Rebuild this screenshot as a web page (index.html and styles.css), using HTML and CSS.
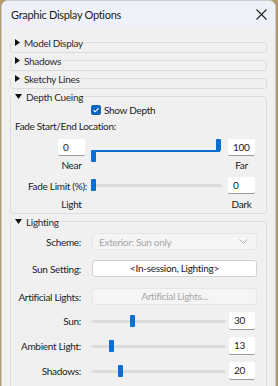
FILE: index.html
```html
<!DOCTYPE html>
<html lang="en">
<head>
<meta charset="UTF-8">
<title>Graphic Display Options</title>
<link rel="stylesheet" href="styles.css">
</head>
<body>

<div class="window">
  <div class="titlebar">
    <span class="title">Graphic Display Options</span>
    <svg class="close" width="11" height="11" viewBox="0 0 11 11"><path d="M0.5 0.5L10.5 10.5M10.5 0.5L0.5 10.5" stroke="#222" stroke-width="1.1"/></svg>
  </div>

  <div class="content">
    <div class="group collapsed">
      <div class="group-head"><svg class="tri" width="5" height="7" viewBox="0 0 5 7"><path d="M0 0L5 3.5L0 7Z" fill="#111"/></svg>Model Display</div>
    </div>
    <div class="group collapsed">
      <div class="group-head"><svg class="tri" width="5" height="7" viewBox="0 0 5 7"><path d="M0 0L5 3.5L0 7Z" fill="#111"/></svg>Shadows</div>
    </div>
    <div class="group collapsed">
      <div class="group-head"><svg class="tri" width="5" height="7" viewBox="0 0 5 7"><path d="M0 0L5 3.5L0 7Z" fill="#111"/></svg>Sketchy Lines</div>
    </div>

    <div class="group depth">
      <div class="group-head"><svg class="tri" width="7" height="5" viewBox="0 0 7 5"><path d="M0 0L7 0L3.5 5Z" fill="#111"/></svg>Depth Cueing</div>

      <div class="check-row">
        <span class="checkbox"><svg width="10" height="10" viewBox="0 0 10 10"><path d="M2.5 5.2L4.2 6.8L7.6 3.2" stroke="#fff" stroke-width="1.1" fill="none"/></svg></span>
        Show Depth
      </div>
      <div class="caption">Fade Start/End Location:</div>

      <div class="depth-grid">
        <div class="num near-box">0</div>
        <div class="range-cell start-range">
          <div class="dual">
            <div class="dual-line"></div>
            <div class="thumb thumb-low"></div>
            <div class="thumb thumb-high"></div>
          </div>
        </div>
        <div class="num far-box">100</div>

        <div class="end-label near">Near</div>
        <div class="end-label far">Far</div>

        <div class="row-label limit-label">Fade Limit (%):</div>
        <div class="range-cell limit-range">
          <div class="track"><div class="thumb" style="--v:0"></div></div>
        </div>
        <div class="num limit-box">0</div>

        <div class="end-label light">Light</div>
        <div class="end-label dark">Dark</div>
      </div>
    </div>

    <div class="group lighting">
      <div class="group-head"><svg class="tri" width="7" height="5" viewBox="0 0 7 5"><path d="M0 0L7 0L3.5 5Z" fill="#111"/></svg>Lighting</div>

      <div class="form-row scheme-row">
        <div class="row-label">Scheme:</div>
        <div class="select disabled">
          <span>Exterior: Sun only</span>
          <svg width="9" height="5" viewBox="0 0 9 5"><path d="M0.5 0.5L4.5 4.5L8.5 0.5" stroke="#b4b4b4" stroke-width="1" fill="none"/></svg>
        </div>
      </div>
      <div class="form-row sun-setting-row">
        <div class="row-label">Sun Setting:</div>
        <div class="button">&lt;In-session, Lighting&gt;</div>
      </div>
      <div class="form-row artificial-row">
        <div class="row-label">Artificial Lights:</div>
        <div class="button disabled">Artificial Lights...</div>
      </div>
      <div class="form-row slider-row">
        <div class="row-label">Sun:</div>
        <div class="track"><div class="thumb" style="--v:0.30"></div></div>
        <div class="num">30</div>
      </div>
      <div class="form-row slider-row">
        <div class="row-label">Ambient Light:</div>
        <div class="track"><div class="thumb" style="--v:0.13"></div></div>
        <div class="num">13</div>
      </div>
      <div class="form-row slider-row">
        <div class="row-label">Shadows:</div>
        <div class="track"><div class="thumb" style="--v:0.20"></div></div>
        <div class="num">20</div>
      </div>
    </div>
  </div>
</div>

</body>
</html>
```

FILE: styles.css
```css
body {
  margin: 0;
  padding-left: 1px;
  background-color: #b49a6c;
  font-family: 'Lato', 'Noto Sans', sans-serif;
  font-size: 10px;
  letter-spacing: -0.3px;
  color: #1b1b1b;
  overflow: hidden;
}

.window {
  width: 273px;
  height: 400px;
  background-color: #f0f0f0;
  border: 1px solid #cdcdcd;
  border-radius: 7px 7px 0 0;
  overflow: hidden;
}

.titlebar {
  height: 27px;
  display: flex;
  align-items: center;
  justify-content: space-between;
  padding: 0 8px 0 9px;
  background-color: #eef2f8;
}

.title {
  font-size: 11px;
  letter-spacing: -0.3px;
  color: #1a1a1a;
}

.close {
  margin-top: -1px;
}

.content {
  padding: 14px 8px 0 8px;
}

/* group boxes */

.group {
  border: 1px solid #dcdcdc;
  border-radius: 3px;
  margin-top: 7px;
  box-sizing: border-box;
}

.group:first-child {
  margin-top: 0;
}

.group.collapsed {
  height: 11px;
}

.group-head {
  display: flex;
  align-items: center;
  gap: 4px;
  width: max-content;
  height: 13px;
  margin: -7px 0 0 1px;
  padding: 0 2px 0 3px;
  background-color: #f0f0f0;
  color: #2a2a2a;
}

.group-head .tri {
  flex: none;
}

/* depth cueing */

.depth {
  height: 118px;
}

.check-row {
  display: flex;
  align-items: center;
  gap: 3px;
  height: 14px;
  margin-left: 80px;
}

.checkbox {
  display: flex;
  width: 10px;
  height: 10px;
  border-radius: 2px;
  background-color: #0a64bf;
}

.caption {
  height: 14px;
  line-height: 14px;
  margin: 2px 0 0 4px;
}

.depth-grid {
  display: grid;
  grid-template-columns: 47px 27px 143px 27px;
  grid-template-rows: 17px 21px 17px 16px;
  margin-top: 6px;
}

.near-box { grid-column: 2; grid-row: 1; }
.start-range { grid-column: 3; grid-row: 1; }
.far-box { grid-column: 4; grid-row: 1; }
.near { grid-column: 2; grid-row: 2; margin-top: 3px; }
.far { grid-column: 4; grid-row: 2; margin-top: 3px; }
.limit-label { grid-column: 1 / 3; grid-row: 3; justify-self: end; margin-right: -2px; }
.limit-range { grid-column: 3; grid-row: 3; }
.limit-box { grid-column: 4; grid-row: 3; }
.light { grid-column: 2; grid-row: 4; margin-top: 4px; }
.dark { grid-column: 4; grid-row: 4; margin-top: 4px; }

.range-cell {
  padding: 0 6px;
}

.end-label {
  text-align: center;
  line-height: 12px;
}

/* fields */

.num {
  box-sizing: border-box;
  height: 17px;
  padding: 0 5px;
  line-height: 16px;
  background-color: #fff;
  border-bottom: 1px solid #9a9a9a;
  border-radius: 2px;
}

.row-label {
  display: flex;
  align-items: center;
  height: 17px;
}

/* sliders */

.track {
  position: relative;
  height: 3px;
  margin-top: 7px;
  background-color: #dcdcdc;
  border-radius: 2px;
}

.thumb {
  position: absolute;
  top: -5px;
  left: calc((100% - 6px) * var(--v));
  width: 5px;
  height: 12px;
  background-color: #0a6fd0;
  border-radius: 1px;
}

.dual {
  position: relative;
  height: 17px;
}

.dual-line {
  position: absolute;
  left: 1px;
  right: 2px;
  top: 11px;
  height: 2px;
  background-color: #0a6fd0;
}

.dual .thumb-low {
  top: 11px;
  left: 0;
}

.dual .thumb-high {
  top: 0;
  left: auto;
  right: 1px;
}

/* lighting */

.lighting {
  height: 200px;
}

.form-row {
  display: grid;
  grid-template-columns: 70px 165px;
  column-gap: 11px;
  align-items: center;
}

.form-row .row-label {
  justify-content: flex-end;
}

.scheme-row { margin-top: 5px; }
.sun-setting-row { margin-top: 10px; }
.artificial-row { margin-top: 11px; }
.slider-row { margin-top: 7px; }

.slider-row {
  grid-template-columns: 70px 130px 26px;
  column-gap: 11px;
}

.slider-row .track {
  margin: 0 -4px 0 0;
}

.slider-row .num {
  height: 18px;
  line-height: 17px;
  margin-left: -4px;
  width: 26px;
}

.select, .button {
  box-sizing: border-box;
  height: 17px;
  border: 1px solid #d2d2d2;
  border-radius: 3px;
  background-color: #fff;
}

.select {
  display: flex;
  align-items: center;
  justify-content: space-between;
  padding: 0 8px 0 6px;
}

.button {
  text-align: center;
  line-height: 15px;
}

.disabled {
  background-color: #f5f5f5;
  border-color: #e6e6e6;
  color: #a6a6a6;
}
```
